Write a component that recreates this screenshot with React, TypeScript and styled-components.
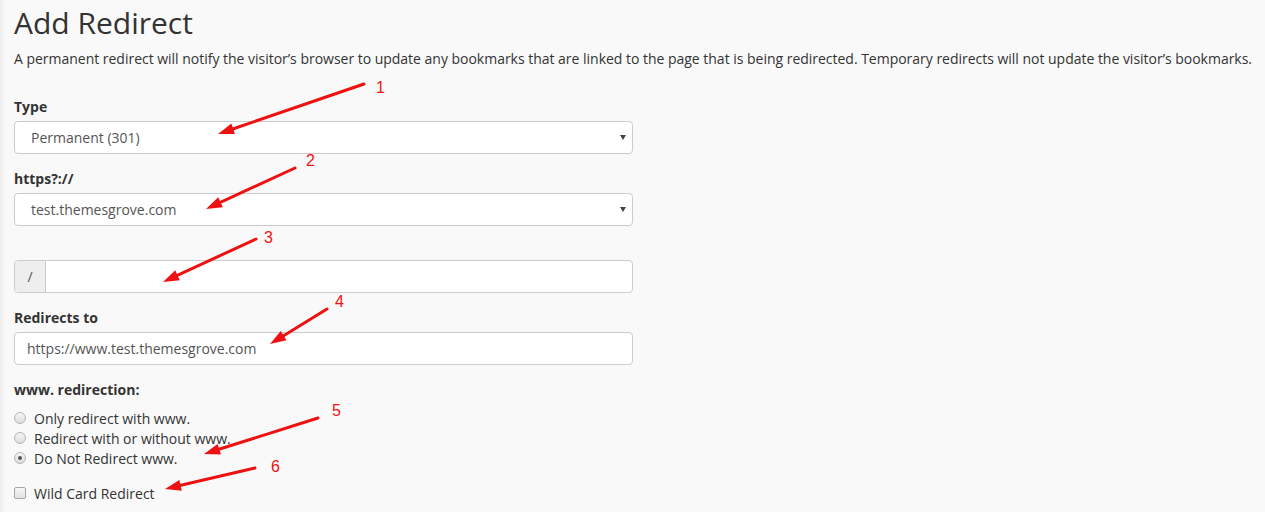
import React from "react";
import styled, { createGlobalStyle } from "styled-components";

const GlobalStyle = createGlobalStyle`
  html, body {
    margin: 0;
    padding: 0;
    background: #f9f9f9;
  }
  body {
    font-family: "Open Sans", "Liberation Sans", sans-serif;
    font-size: 14px;
    color: #333;
  }
`;

const Page = styled.div`
  position: relative;
  width: 1265px;
  height: 512px;
  overflow: hidden;
  box-sizing: border-box;
  padding: 6px 0 0 14px;
  box-shadow: inset 4px 0 4px -2px rgba(0, 0, 0, 0.06);
`;

const Title = styled.h1`
  margin: 0 0 10px;
  font-size: 30px;
  line-height: 33px;
  font-weight: 400;
  color: #333;
`;

const Description = styled.p`
  margin: 0 0 28px;
  line-height: 20px;
  white-space: nowrap;
  letter-spacing: -0.018px;
`;

const Form = styled.div`
  width: 619px;
`;

const Group = styled.div<{ $gap?: number }>`
  margin-bottom: ${(p) => (p.$gap ?? 15)}px;
`;

const Label = styled.div<{ $empty?: boolean; $below?: number }>`
  display: block;
  font-weight: 700;
  line-height: 20px;
  height: ${(p) => (p.$empty ? "15px" : "20px")};
  margin-bottom: ${(p) => p.$below ?? 4}px;
`;

const Field = styled.div`
  box-sizing: border-box;
  height: 33px;
  background: #fff;
  border: 1px solid #ccc;
  border-radius: 4px;
  display: flex;
  align-items: center;
  color: #555;
  line-height: 20px;
`;

const SelectBox = styled(Field)`
  justify-content: space-between;
  padding: 0 6px 0 16px;
`;

const Caret = styled.span`
  width: 0;
  height: 0;
  border-left: 3px solid transparent;
  border-right: 3px solid transparent;
  border-top: 5px solid #444;
`;

const TextInput = styled(Field)`
  padding: 0 12px;
`;

const InputGroup = styled(Field)`
  overflow: hidden;
`;

const Addon = styled.span`
  width: 30px;
  height: 100%;
  display: flex;
  align-items: center;
  justify-content: center;
  background: #eee;
  border-right: 1px solid #ccc;
  color: #555;
`;

const Option = styled.div`
  display: flex;
  align-items: center;
  height: 20px;
  gap: 8px;
`;

const Radio = styled.span<{ $checked?: boolean }>`
  box-sizing: border-box;
  width: 12px;
  height: 12px;
  border-radius: 50%;
  border: 1px solid #b4b4b4;
  background: linear-gradient(#f4f4f4, #dedede);
  display: flex;
  align-items: center;
  justify-content: center;
  &::after {
    content: "";
    display: ${(p) => (p.$checked ? "block" : "none")};
    width: 4px;
    height: 4px;
    border-radius: 50%;
    background: #555;
  }
`;

const Checkbox = styled.span`
  box-sizing: border-box;
  width: 12px;
  height: 12px;
  border-radius: 2px;
  border: 1px solid #a8a8a8;
  background: linear-gradient(#f6f6f6, #e2e2e2);
`;

const Overlay = styled.svg`
  position: absolute;
  left: 0;
  top: 0;
  pointer-events: none;
`;

const Number = styled.text`
  font-family: "Liberation Sans", Arial, sans-serif;
  font-size: 16px;
  fill: #ee1111;
`;

type Arrow = { x1: number; y1: number; x2: number; y2: number; n: string; tx: number; ty: number };

const arrows: Arrow[] = [
  { x1: 364, y1: 84, x2: 218, y2: 134, n: "1", tx: 376, ty: 93 },
  { x1: 295, y1: 168, x2: 206, y2: 209, n: "2", tx: 306, ty: 166 },
  { x1: 256, y1: 239, x2: 163, y2: 282, n: "3", tx: 264, ty: 243 },
  { x1: 327, y1: 309, x2: 270, y2: 344, n: "4", tx: 335, ty: 307 },
  { x1: 318, y1: 418, x2: 204, y2: 454, n: "5", tx: 332, ty: 416 },
  { x1: 255, y1: 468, x2: 165, y2: 489, n: "6", tx: 271, ty: 472 },
];

const ArrowMark = ({ a }: { a: Arrow }) => {
  const dx = a.x2 - a.x1;
  const dy = a.y2 - a.y1;
  const len = Math.hypot(dx, dy);
  const ux = dx / len;
  const uy = dy / len;
  const head = 16;
  const half = 5.5;
  const bx = a.x2 - ux * head;
  const by = a.y2 - uy * head;
  const pts = `${a.x2},${a.y2} ${bx - uy * half},${by + ux * half} ${bx + uy * half},${by - ux * half}`;
  return (
    <g>
      <line x1={a.x1} y1={a.y1} x2={bx + ux * 2} y2={by + uy * 2} stroke="#ee1111" strokeWidth={3} strokeLinecap="round" />
      <polygon points={pts} fill="#ee1111" />
      <Number x={a.tx} y={a.ty}>{a.n}</Number>
    </g>
  );
};

export default function App() {
  return (
    <>
      <GlobalStyle />
      <Page>
        <Title>Add Redirect</Title>
        <Description>
          A permanent redirect will notify the visitor’s browser to update any bookmarks that are linked to the page that is being redirected. Temporary redirects will not update the visitor’s bookmarks.
        </Description>
        <Form>
          <Group>
            <Label>Type</Label>
            <SelectBox>
              <span>Permanent (301)</span>
              <Caret />
            </SelectBox>
          </Group>
          <Group>
            <Label>https?://</Label>
            <SelectBox>
              <span>test.themesgrove.com</span>
              <Caret />
            </SelectBox>
          </Group>
          <Group>
            <Label $empty />
            <InputGroup>
              <Addon>/</Addon>
            </InputGroup>
          </Group>
          <Group>
            <Label>Redirects to</Label>
            <TextInput>https://www.test.themesgrove.com</TextInput>
          </Group>
          <Group $gap={15}>
            <Label $below={8}>www. redirection:</Label>
            <Option>
              <Radio />
              <span>Only redirect with www.</span>
            </Option>
            <Option>
              <Radio />
              <span>Redirect with or without www.</span>
            </Option>
            <Option>
              <Radio $checked />
              <span>Do Not Redirect www.</span>
            </Option>
          </Group>
          <Option>
            <Checkbox />
            <span>Wild Card Redirect</span>
          </Option>
        </Form>
        <Overlay width={1265} height={512}>
          {arrows.map((a) => (
            <ArrowMark key={a.n} a={a} />
          ))}
        </Overlay>
      </Page>
    </>
  );
}
